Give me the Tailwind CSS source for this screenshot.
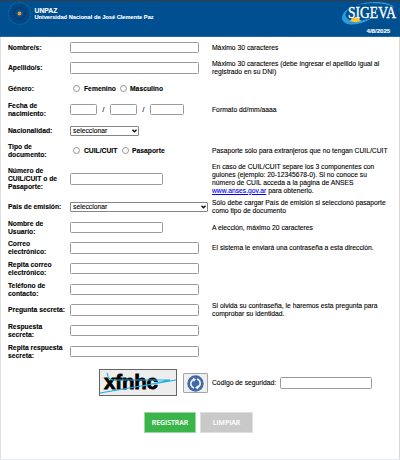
<!DOCTYPE html>
<html lang="es">
<head>
<meta charset="utf-8">
<title>SIGEVA - Registro</title>
<script src="https://cdn.jsdelivr.net/npm/@tailwindcss/browser@4"></script>
</head>
<body class="w-[400px] h-[460px] overflow-hidden bg-white text-black font-['Liberation_Sans',Arial,sans-serif] text-[6.75px] leading-[7.8px] [-webkit-text-stroke:0.1px_currentColor]">
<div class="w-[400px] h-[460px] flex flex-col overflow-hidden">
<header class="h-[37px] shrink-0 bg-[#004f91] border-t border-t-[#3b3c40] border-b border-b-[#2868a0] flex justify-between text-white font-bold">
  <div class="flex">
    <svg class="ml-[7px] w-[25px] h-[25px]" viewBox="0 0 25 25" fill="none">
      <circle cx="12.5" cy="12.5" r="11" stroke="#08659b" stroke-width="1.8" stroke-dasharray="1.5 1.1"/>
      <circle cx="12.5" cy="12.5" r="8.2" stroke="#06457f" stroke-width="3.6" stroke-dasharray="1.8 .5"/>
      <circle cx="12.5" cy="12.5" r="5.4" stroke="#093e74" stroke-width="2.6" stroke-dasharray="1.7 .4"/>
      <circle cx="12.5" cy="12.5" r="1.9" fill="#e99a25"/>
    </svg>
    <div class="ml-[2.5px] pt-[6px] whitespace-nowrap leading-[7px]">
      <div class="text-[6.8px]">UNPAZ</div>
      <div class="text-[5.7px]">Universidad Nacional de José Clemente Paz</div>
    </div>
  </div>
  <div class="w-[60px] flex flex-col">
    <svg class="w-[60px] h-[25px] overflow-visible" viewBox="0 0 60 25">
      <path d="M10 7C-1 12-1 24 13 23.5C21 23 28 20 33 16C24 20 13 22 8 18C4 15 5 11 10 7Z" fill="#2c9bdc"/>
      <path d="M16 4C31-1 49 0 56 7C47 2 33 1 16 4Z" fill="#2c9bdc"/>
      <path d="M10 20L11.5 18L12 17L14 17.3L15.5 15.8L17 17.3L19.5 17L19.7 19L21.5 20Q15 22.3 10 20Z" fill="#ffc52d"/>
      <text x="8" y="17" textLength="48" lengthAdjust="spacingAndGlyphs" font-family="Liberation Serif, serif" font-weight="400" font-size="15.8" fill="#fff" stroke="#fff" stroke-width=".35">SIGEVA</text>
    </svg>
    <div class="pl-[26.5px] pt-[1px] text-[6.1px] leading-[8px]">4/8/2025</div>
  </div>
</header>
<main class="h-[422px] shrink-0 border-l border-l-[#dedede] border-r border-r-[#d6d6d6] pl-[7px]">
  <div class="grid grid-cols-[62px_142px_1fr] grid-rows-[21px_20px_21px_21px_21px_20px_36px_20px_21px_20px_21px_21px_20px_21px_21px_42px] items-center whitespace-nowrap">
    <div class="font-bold">Nombre/s:</div>
    <input class="w-[129px] h-[11.5px] rounded-[1.5px] border border-[#9a9a9a] bg-white">
    <div>Máximo 30 caracteres</div>

    <div class="font-bold">Apellido/s:</div>
    <input class="w-[129px] h-[11.5px] rounded-[1.5px] border border-[#9a9a9a] bg-white">
    <div>Máximo 30 caracteres (debe ingresar el apellido igual al<br>registrado en su DNI)</div>

    <div class="font-bold">Género:</div>
    <div class="flex items-center font-bold pl-[3px]">
      <i class="w-[7px] h-[7px] rounded-full border border-[#949494]"></i><span class="ml-[4px] w-[36px]">Femenino</span>
      <i class="w-[7px] h-[7px] rounded-full border border-[#949494]"></i><span class="ml-[3px]">Masculino</span>
    </div>
    <div></div>

    <div class="font-bold">Fecha de<br>nacimiento:</div>
    <div class="flex items-center">
      <input class="w-[27px] h-[11.5px] rounded-[1.5px] border border-[#9a9a9a] bg-white"><span class="w-[13px] text-center">/</span>
      <input class="w-[27px] h-[11.5px] rounded-[1.5px] border border-[#9a9a9a] bg-white"><span class="w-[13px] text-center">/</span>
      <input class="w-[34px] h-[11.5px] rounded-[1.5px] border border-[#9a9a9a] bg-white">
    </div>
    <div>Formato dd/mm/aaaa</div>

    <div class="font-bold">Nacionalidad:</div>
    <div class="w-[69px] h-[10px] rounded-[1px] border border-[#858585] flex items-center justify-between pl-[2px] pr-[1.5px]"><span>seleccionar</span>
      <svg class="w-[5px] h-[4px]" viewBox="0 0 5 4"><path d="M.5 .8L2.5 2.8L4.5 .8" fill="none" stroke="#000" stroke-width="1.3"/></svg></div>
    <div></div>

    <div class="font-bold">Tipo de<br>documento:</div>
    <div class="flex items-center font-bold pl-[3px]">
      <i class="w-[7px] h-[7px] rounded-full border border-[#949494]"></i><span class="ml-[4px] w-[38px]">CUIL/CUIT</span>
      <i class="w-[7px] h-[7px] rounded-full border border-[#949494]"></i><span class="ml-[3px]">Pasaporte</span>
    </div>
    <div>Pasaporte sólo para extranjeros que no tengan CUIL/CUIT</div>

    <div class="font-bold">Número de<br>CUIL/CUIT o de<br>Pasaporte:</div>
    <input class="w-[93px] h-[11.5px] rounded-[1.5px] border border-[#9a9a9a] bg-white">
    <div>En caso de CUIL/CUIT separe los 3 componentes con<br>guiones (ejemplo: 20-12345678-0). Si no conoce su<br>número de CUIL acceda a la página de ANSES<br><a class="text-[#0000ee] underline">www.anses.gov.ar</a> para obtenerlo.</div>

    <div class="font-bold">Pais de emisión:</div>
    <div class="w-[138px] h-[10px] rounded-[1px] border border-[#858585] flex items-center justify-between pl-[2px] pr-[1.5px]"><span>seleccionar</span>
      <svg class="w-[5px] h-[4px]" viewBox="0 0 5 4"><path d="M.5 .8L2.5 2.8L4.5 .8" fill="none" stroke="#000" stroke-width="1.3"/></svg></div>
    <div>Sólo debe cargar País de emisión si seleccionó pasaporte<br>como tipo de documento</div>

    <div class="font-bold">Nombre de<br>Usuario:</div>
    <input class="w-[93px] h-[11.5px] rounded-[1.5px] border border-[#9a9a9a] bg-white">
    <div>A elección, máximo 20 caracteres</div>

    <div class="font-bold">Correo<br>electrónico:</div>
    <input class="w-[129px] h-[11.5px] rounded-[1.5px] border border-[#9a9a9a] bg-white">
    <div>El sistema le enviará una contraseña a esta dirección.</div>

    <div class="font-bold">Repita correo<br>electrónico:</div>
    <input class="w-[129px] h-[11.5px] rounded-[1.5px] border border-[#9a9a9a] bg-white">
    <div></div>

    <div class="font-bold">Teléfono de<br>contacto:</div>
    <input class="w-[129px] h-[11.5px] rounded-[1.5px] border border-[#9a9a9a] bg-white">
    <div></div>

    <div class="font-bold">Pregunta secreta:</div>
    <input class="w-[129px] h-[11.5px] rounded-[1.5px] border border-[#9a9a9a] bg-white">
    <div>Si olvida su contraseña, le haremos esta pregunta para<br>comprobar su identidad.</div>

    <div class="font-bold">Respuesta<br>secreta:</div>
    <input class="w-[129px] h-[11.5px] rounded-[1.5px] border border-[#9a9a9a] bg-white">
    <div></div>

    <div class="font-bold">Repita respuesta<br>secreta:</div>
    <input class="w-[129px] h-[11.5px] rounded-[1.5px] border border-[#9a9a9a] bg-white">
    <div></div>

    <div></div>
    <div class="flex items-center pl-[29px]">
      <svg class="w-[78px] h-[27px] shrink-0 mb-[2px] overflow-visible" viewBox="0 0 78 27">
        <rect x=".5" y=".5" width="77" height="26" fill="#ededed" stroke="#656565"/>
        <text x="5" y="19.8" textLength="54" lengthAdjust="spacing" font-family="Liberation Sans, sans-serif" font-size="20.5" font-weight="700" fill="#000" stroke="#000" stroke-width=".8">xfnhc</text>
        <path d="M8 4L9.5 9L13 11L71 11L44 17M1 24L77 11" fill="none" stroke="#1aaee8" stroke-width="1.1"/>
      </svg>
      <div class="ml-[6px] w-[25px] h-[20px] shrink-0 rounded-[1px] border border-[#a5a5a5] bg-[#efefef] flex items-center justify-center">
        <svg class="w-[17px] h-[17px]" viewBox="0 0 17 17" fill="none"><circle cx="8.5" cy="8.5" r="8.2" fill="#4169a5"/><path d="M7 13C2.8 11.5 2.8 6 6.8 4.4M10 4C14.2 5.5 14.2 11 10.2 12.6" stroke="#e9eff7" stroke-width="1.6"/><path d="M5.8 2.6L9 4.2L6.8 6.9ZM11.2 10.1L8 12.8L11.2 14.4Z" fill="#e9eff7"/></svg>
      </div>
    </div>
    <div class="flex items-center"><span class="w-[68px]">Código de seguridad:</span><input class="w-[92px] h-[11.5px] rounded-[1.5px] border border-[#9a9a9a] bg-white"></div>
  </div>
  <div class="flex pl-[136px] pt-[8px] gap-[4px] font-['Open_Sans',sans-serif] font-semibold text-[6.9px] text-white">
    <div class="w-[52px] h-[21px] bg-[#39b54a] border border-[#9bd8a4] flex items-center justify-center">REGISTRAR</div>
    <div class="w-[53px] h-[21px] bg-[#c9c9c9] border border-[#dedede] flex items-center justify-center">LIMPIAR</div>
  </div>
</main>
<div class="h-px shrink-0 bg-[#e1e9f2]"></div>
</div>
</body>
</html>
